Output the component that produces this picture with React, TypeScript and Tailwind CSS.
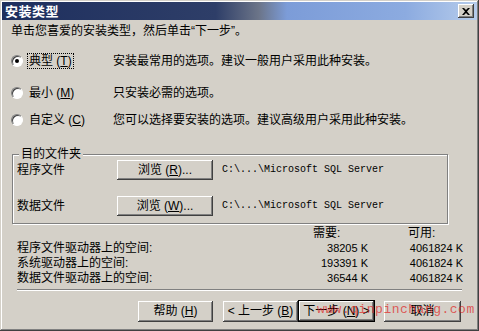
import React from 'react';

const raised =
  'bg-[#d4d0c8] shadow-[inset_-1px_-1px_0_#404040,inset_1px_1px_0_#ffffff,inset_-2px_-2px_0_#808080,inset_2px_2px_0_#d4d0c8]';

function Radio({ checked }: { checked?: boolean }) {
  return (
    <span className="w-[12px] h-[12px] rounded-full bg-white border border-t-[#808080] border-l-[#808080] border-r-white border-b-white shadow-[inset_1px_1px_0_#404040] flex items-center justify-center">
      {checked && <span className="w-[4px] h-[4px] rounded-full bg-black" />}
    </span>
  );
}

function WinButton({ children, wide, isDefault }: { children: React.ReactNode; wide?: string; isDefault?: boolean }) {
  if (isDefault) {
    return (
      <div className={`border border-black ${wide ?? 'w-[77px]'} h-[22px] flex`}>
        <button className={`${raised} flex-1 flex items-center justify-center text-[12px]`}>{children}</button>
      </div>
    );
  }
  return (
    <button className={`${raised} ${wide ?? 'w-[75px]'} h-[21px] flex items-center justify-center text-[12px]`}>
      {children}
    </button>
  );
}

const options = [
  { label: '典型', key: 'T', desc: '安装最常用的选项。建议一般用户采用此种安装。', checked: true, mt: 'mt-[15px]' },
  { label: '最小', key: 'M', desc: '只安装必需的选项。', mt: 'mt-[16px]' },
  { label: '自定义', key: 'C', desc: '您可以选择要安装的选项。建议高级用户采用此种安装。', mt: 'mt-[11px]' },
];

const spaces = [
  { name: '程序文件驱动器上的空间:', need: '38205 K', free: '4061824 K' },
  { name: '系统驱动器上的空间:', need: '193391 K', free: '4061824 K' },
  { name: '数据文件驱动器上的空间:', need: '36544 K', free: '4061824 K' },
];

export default function App() {
  return (
    <div className="w-[479px] h-[331px] bg-[#d4d0c8] relative flex flex-col p-[2px] text-black font-['Liberation_Sans','Noto_Sans_CJK_SC',sans-serif] shadow-[inset_-1px_-1px_0_#404040,inset_1px_1px_0_#d4d0c8,inset_-2px_-2px_0_#808080,inset_2px_2px_0_#ffffff] overflow-hidden">
      {/* title bar */}
      <div className="h-[18px] flex items-center justify-between pl-[3px] pr-[3px] bg-[linear-gradient(to_right,#1e2f5e_0%,#2e3e68_45%,#6b7488_54%,#7c9cd8_60%,#8cabe0_85%,#b6cceb_100%)]">
        <span className="text-white font-bold text-[13px] leading-none tracking-[0.5px]">安装类型</span>
        <span className={`${raised} w-[16px] h-[14px] flex items-center justify-center`}>
          <svg width="8" height="7" viewBox="0 0 8 7">
            <path d="M0 0h2l2 2 2-2h2L5 3.5 8 7H6L4 5 2 7H0l3-3.5z" fill="#000" />
          </svg>
        </span>
      </div>

      <div className="mt-[4px] pl-[9px] text-[12px] leading-[14px]">单击您喜爱的安装类型，然后单击“下一步”。</div>

      {options.map((o) => (
        <div key={o.key} className={`${o.mt} h-[16px] flex items-center text-[12px] leading-[14px]`}>
          <div className="w-[111px] flex items-center pl-[9px]">
            <Radio checked={o.checked} />
            <span className={`ml-[5px] px-[1px] ${o.checked ? 'outline outline-1 outline-dotted outline-black' : ''}`}>
              {o.label} (<u>{o.key}</u>)
            </span>
          </div>
          <span>{o.desc}</span>
        </div>
      ))}

      {/* destination folder group */}
      <div className="mt-[26px] ml-[10px] w-[436px] h-[70px] relative border border-[#808080] shadow-[1px_1px_0_#ffffff,inset_1px_1px_0_#ffffff] flex flex-col text-[12px] leading-[14px]">
        <span className="absolute -top-[8px] left-[6px] px-[2px] bg-[#d4d0c8]">目的文件夹</span>
        {[
          { name: '程序文件', key: 'R', mt: 'mt-[5px]' },
          { name: '数据文件', key: 'W', mt: 'mt-[16px]' },
        ].map((r) => (
          <div key={r.key} className={`${r.mt} flex items-center h-[20px]`}>
            <span className="w-[104px] pl-[4px]">{r.name}</span>
            <button className={`${raised} w-[96px] h-[20px] flex items-center justify-center`}>
              浏览 (<u>{r.key}</u>)...
            </button>
            <span className="ml-[9px] font-['Liberation_Mono',monospace] text-[10px]">C:\...\Microsoft SQL Server</span>
          </div>
        ))}
      </div>

      {/* disk space */}
      <div className="mt-[2px] ml-[15px] grid grid-cols-[296px_55px_40px_55px] auto-rows-[15px] text-[12px] leading-[15px]">
        <span />
        <span>需要:</span>
        <span />
        <span>可用:</span>
        {spaces.map((s) => (
          <React.Fragment key={s.name}>
            <span>{s.name}</span>
            <span className="text-right text-[11px]">{s.need}</span>
            <span />
            <span className="text-right text-[11px]">{s.free}</span>
          </React.Fragment>
        ))}
      </div>

      {/* separator */}
      <div className="mt-[3px] ml-[15px] w-[445px] h-[2px] border-t border-t-[#808080] border-b border-b-white" />

      {/* buttons */}
      <div className="mt-[9px] flex items-center justify-end pr-[16px]">
        <WinButton>
          帮助 (<u>H</u>)
        </WinButton>
        <div className="w-[10px]" />
        <WinButton>
          &lt; 上一步 (<u>B</u>)
        </WinButton>
        <WinButton isDefault>
          下一步 (<u>N</u>) &gt;
        </WinButton>
        <div className="w-[9px]" />
        <WinButton wide="w-[77px]">取消</WinButton>
      </div>

      {/* watermark */}
      <span className="absolute left-[317px] top-[300px] text-[13px] font-['Liberation_Mono',monospace] text-[#e02020]/70 pointer-events-none tracking-[0.5px]">
        www.qinpinchang.com
      </span>
    </div>
  );
}
